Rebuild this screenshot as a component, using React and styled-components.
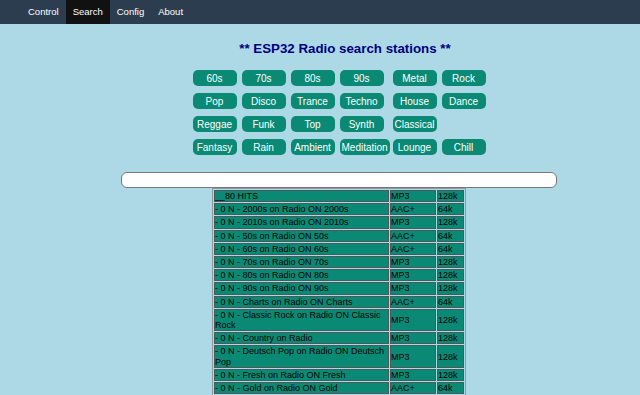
import styled, { createGlobalStyle } from "styled-components";

const teal = "#0a8a75";

const tabs = ["Control", "Search", "Config", "About"];

const leftGenres = [
  "60s", "70s", "80s", "90s",
  "Pop", "Disco", "Trance", "Techno",
  "Reggae", "Funk", "Top", "Synth",
  "Fantasy", "Rain", "Ambient", "Meditation",
];

const rightGenres = [
  "Metal", "Rock",
  "House", "Dance",
  "Classical", null,
  "Lounge", "Chill",
];

const stations = [
  ["__80 HITS", "MP3", "128k"],
  ["- 0 N - 2000s on Radio ON 2000s", "AAC+", "64k"],
  ["- 0 N - 2010s on Radio ON 2010s", "MP3", "128k"],
  ["- 0 N - 50s on Radio ON 50s", "AAC+", "64k"],
  ["- 0 N - 60s on Radio ON 60s", "AAC+", "64k"],
  ["- 0 N - 70s on Radio ON 70s", "MP3", "128k"],
  ["- 0 N - 80s on Radio ON 80s", "MP3", "128k"],
  ["- 0 N - 90s on Radio ON 90s", "MP3", "128k"],
  ["- 0 N - Charts on Radio ON Charts", "AAC+", "64k"],
  ["- 0 N - Classic Rock on Radio ON Classic Rock", "MP3", "128k"],
  ["- 0 N - Country on Radio", "MP3", "128k"],
  ["- 0 N - Deutsch Pop on Radio ON Deutsch Pop", "MP3", "128k"],
  ["- 0 N - Fresh on Radio ON Fresh", "MP3", "128k"],
  ["- 0 N - Gold on Radio ON Gold", "AAC+", "64k"],
];

const App = () => {
  return (
    <>
      <GlobalStyle />
      <TopNav>
        {tabs.map((t) => (
          <NavLink key={t} $active={t === "Search"}>
            {t}
          </NavLink>
        ))}
      </TopNav>
      <Main>
        <Title>** ESP32 Radio search stations **</Title>
        <GenreBlock>
          <GenreGroup $cols={4}>
            {leftGenres.map((g) => (
              <GenreButton key={g}>{g}</GenreButton>
            ))}
          </GenreGroup>
          <GenreGroup $cols={2}>
            {rightGenres.map((g, i) =>
              g ? <GenreButton key={g}>{g}</GenreButton> : <span key={i} />
            )}
          </GenreGroup>
        </GenreBlock>
        <SearchInput type="text" />
        <StationTable>
          <colgroup>
            <col style={{ width: 175 }} />
            <col style={{ width: 46 }} />
            <col style={{ width: 27 }} />
          </colgroup>
          <tbody>
            {stations.map(([name, fmt, rate]) => (
              <tr key={name}>
                <td>{name}</td>
                <td>{fmt}</td>
                <td>{rate}</td>
              </tr>
            ))}
          </tbody>
        </StationTable>
      </Main>
    </>
  );
};

export default App;

const GlobalStyle = createGlobalStyle`
  body {
    margin: 0;
    background: #add8e6;
    font-family: "Liberation Sans", Arial, Helvetica, sans-serif;
  }
`;

const TopNav = styled.nav`
  display: flex;
  height: 24px;
  padding-left: 21px;
  background: #2c3d4f;
`;

const NavLink = styled.a`
  padding: 0 7px;
  line-height: 24px;
  font-size: 9.5px;
  color: #fff;
  cursor: pointer;
  background: ${({ $active }) => ($active ? "#111" : "transparent")};
`;

const Main = styled.main`
  padding-left: 38px;
  text-align: center;
`;

const Title = styled.h2`
  margin: 17px 0 14px;
  padding-left: 12px;
  font-size: 13.3px;
  line-height: 15px;
  font-weight: bold;
  color: #000080;
`;

const GenreBlock = styled.div`
  display: flex;
  justify-content: center;
  gap: 9px;
`;

const GenreGroup = styled.div`
  display: grid;
  grid-template-columns: repeat(${({ $cols }) => $cols}, 44px);
  grid-auto-rows: 16px;
  column-gap: 5px;
  row-gap: 7px;
`;

const GenreButton = styled.button`
  justify-self: start;
  min-width: 44px;
  height: 16px;
  padding: 0 2px;
  border: none;
  border-radius: 5px;
  background: ${teal};
  color: #fff;
  font-family: inherit;
  font-size: 10px;
  white-space: nowrap;
  cursor: pointer;
`;

const SearchInput = styled.input`
  display: block;
  box-sizing: border-box;
  width: 436px;
  height: 16px;
  margin: 17px auto 0;
  border: 1px solid #777;
  border-radius: 6px;
  background: #fff;
`;

const StationTable = styled.table`
  margin: 0 auto;
  table-layout: fixed;
  border-collapse: separate;
  border-spacing: 1px;
  border: 1px solid #8a9aa0;
  text-align: left;
  font-size: 9px;
  line-height: 10.2px;

  td {
    padding: 0;
    border: 1px solid #4a5a5a;
    background: ${teal};
    color: #000;
    vertical-align: middle;
  }
`;
